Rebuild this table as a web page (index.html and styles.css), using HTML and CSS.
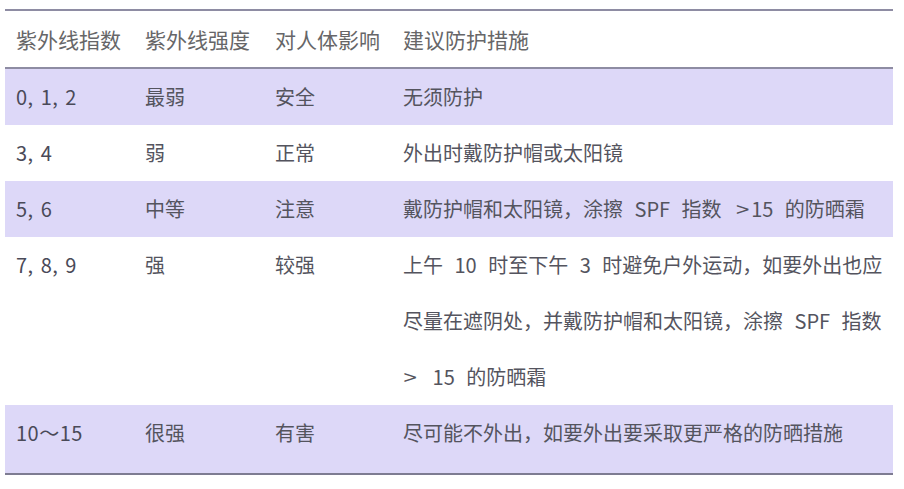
FILE: index.html
```html
<!DOCTYPE html>
<html lang="zh-CN">
<head>
<meta charset="utf-8">
<link rel="stylesheet" href="styles.css">
</head>
<body>
<table class="uv">
  <colgroup>
    <col class="c1"><col class="c2"><col class="c3"><col class="c4">
  </colgroup>
  <thead>
    <tr><th>紫外线指数</th><th>紫外线强度</th><th>对人体影响</th><th>建议防护措施</th></tr>
  </thead>
  <tbody>
    <tr class="alt"><td class="num">0, 1, 2</td><td>最弱</td><td>安全</td><td class="adv">无须防护</td></tr>
    <tr><td class="num">3, 4</td><td>弱</td><td>正常</td><td class="adv">外出时戴防护帽或太阳镜</td></tr>
    <tr class="alt"><td class="num">5, 6</td><td>中等</td><td>注意</td><td class="adv">戴防护帽和太阳镜，涂擦 SPF 指数 <span class="gt">&gt;</span>15 的防晒霜</td></tr>
    <tr><td class="num">7, 8, 9</td><td>强</td><td>较强</td><td class="adv">上午 10 时至下午 3 时避免户外运动，如要外出也应<br>尽量在遮阴处，并戴防护帽和太阳镜，涂擦 SPF 指数<br><span class="gt first">&gt;</span> 15 的防晒霜</td></tr>
    <tr class="alt last"><td class="num">10～15</td><td>很强</td><td>有害</td><td class="adv">尽可能不外出，如要外出要采取更严格的防晒措施</td></tr>
  </tbody>
</table>
</body>
</html>
```
FILE: styles.css
```css
html, body {
  margin: 0;
  padding: 0;
  background: #ffffff;
}
body {
  padding: 9px 11px 0 5px;
  font-family: "Noto Sans CJK SC", "Noto Sans", sans-serif;
}
.uv {
  width: 888px;
  border-collapse: collapse;
  table-layout: fixed;
  border-top: 2px solid #8e8ca3;
  border-bottom: 2px solid #7e7c92;
}
.c1 { width: 129px; }
.c2 { width: 130px; }
.c3 { width: 128px; }
.c4 { width: auto; }
.uv th,
.uv td {
  padding: 0 0 0 11px;
  text-align: left;
  vertical-align: top;
  font-size: 20px;
  line-height: 56px;
  white-space: nowrap;
}
.uv th {
  font-size: 21px;
  font-weight: 400;
  color: #666668;
  height: 56px;
  border-bottom: 2px solid #8e8ca3;
}
.uv td {
  color: #54545e;
}
.uv td.num {
  word-spacing: 2px;
  letter-spacing: 0.5px;
  color: #4a4a58;
}
.uv td.adv {
  word-spacing: 7px;
}
.gt {
  display: inline-block;
  padding: 0 3px 0 4px;
  transform: scaleX(1.2);
}
.gt.first {
  padding: 0 5px 0 2px;
}
.uv tr.alt td {
  background: #ddd8f8;
}
.uv tr.last td {
  padding-bottom: 12px;
}
```
